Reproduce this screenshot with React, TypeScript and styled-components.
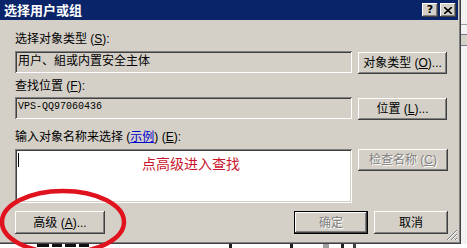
import React from "react";
import styled, { createGlobalStyle, css } from "styled-components";

const Global = createGlobalStyle`
  html, body { margin: 0; padding: 0; background: #ffffff; }
  body { font-family: "Liberation Sans", "Noto Sans CJK SC", sans-serif; font-size: 12px; color: #000; }
  * { box-sizing: border-box; }
`;

const Page = styled.div`
  position: relative;
  width: 467px;
  height: 248px;
  overflow: hidden;
  display: flex;
  flex-direction: column;
  background: #ffffff;
`;

const TopRow = styled.div`
  display: flex;
  height: 244px;
`;

const Dialog = styled.div`
  width: 461px;
  height: 244px;
  background: #d4d0c8;
  display: flex;
  flex-direction: column;
  box-shadow: inset -1px -1px #404040, inset -2px -2px #808080;
`;

const TitleBar = styled.div`
  height: 20px;
  margin-right: 3px;
  background: #0a246a;
  display: flex;
  align-items: center;
  padding: 0 2px 0 4px;
`;

const Title = styled.div`
  flex: 1;
  color: #ffffff;
  font-weight: bold;
  font-size: 13px;
  line-height: 20px;
  font-family: "Noto Sans CJK SC", sans-serif;
`;

const CaptionButton = styled.div`
  width: 16px;
  height: 14px;
  background: #d4d0c8;
  box-shadow: inset -1px -1px #404040, inset 1px 1px #ffffff, inset -2px -2px #808080;
  display: flex;
  align-items: center;
  justify-content: center;
  font-family: "DejaVu Sans", sans-serif;
  font-weight: bold;
  font-size: 11px;
  line-height: 14px;
  color: #000;
  margin-left: 2px;
`;

const Content = styled.div`
  flex: 1;
  display: flex;
  flex-direction: column;
  padding: 11px 13px 0 15px;
  position: relative;
`;

const Label = styled.div<{ $mt?: number; $mb?: number }>`
  height: 16px;
  line-height: 16px;
  margin-top: ${(p) => p.$mt ?? 0}px;
  margin-bottom: ${(p) => p.$mb ?? 0}px;
  white-space: nowrap;
  u { text-decoration: underline; }
`;

const Link = styled.span`
  color: #0000cc;
  text-decoration: underline;
`;

const Row = styled.div`
  display: flex;
  align-items: flex-start;
  gap: 6px;
`;

const sunken = css`
  box-shadow: inset 1px 1px #808080, inset -1px -1px #ffffff, inset 2px 2px #404040, inset -2px -2px #d4d0c8;
`;

const Field = styled.div<{ $mono?: boolean }>`
  width: 337px;
  height: 22px;
  ${sunken};
  background: #d4d0c8;
  padding: 2px 3px 0 3px;
  line-height: 16px;
  white-space: nowrap;
  ${(p) =>
    p.$mono &&
    css`
      font-family: "Liberation Mono", monospace;
      font-size: 10px;
    `}
`;

const TextArea = styled.div`
  width: 337px;
  height: 54px;
  ${sunken};
  background: #ffffff;
  display: flex;
  align-items: flex-start;
  padding: 4px 0 0 3px;
`;

const Caret = styled.div`
  width: 1px;
  height: 14px;
  background: #000;
`;

const Hint = styled.div`
  margin-left: 123px;
  margin-top: 1px;
  color: #c8142c;
  font-size: 14px;
  line-height: 18px;
  font-family: "Noto Sans CJK SC", sans-serif;
`;

const Button = styled.div<{ $w: number; $h?: number; $disabled?: boolean; $default?: boolean; $mt?: number }>`
  width: ${(p) => p.$w}px;
  height: ${(p) => p.$h ?? 22}px;
  margin-top: ${(p) => p.$mt ?? 0}px;
  background: #d4d0c8;
  display: flex;
  align-items: center;
  justify-content: center;
  white-space: nowrap;
  line-height: 16px;
  box-shadow: inset -1px -1px #404040, inset 1px 1px #ffffff, inset -2px -2px #808080, inset 2px 2px #d4d0c8;
  ${(p) =>
    p.$default &&
    css`
      box-shadow: inset 0 0 0 1px #000, inset -2px -2px #404040, inset 2px 2px #ffffff, inset -3px -3px #808080;
    `}
  ${(p) =>
    p.$disabled &&
    css`
      color: #808080;
      text-shadow: 1px 1px #ffffff;
    `}
`;

const Footer = styled.div`
  display: flex;
  align-items: flex-start;
  margin-top: 8px;
  gap: 6px;
`;

const Spacer = styled.div`
  flex: 1;
`;

const Grip = styled.svg`
  position: absolute;
  right: 3px;
  bottom: 3px;
`;

const RightStrip = styled.div`
  flex: 1;
  background: #f2f2f2;
  display: flex;
  flex-direction: column;
`;

const StripLine = styled.div<{ $h: number; $c: string; $mt?: number }>`
  height: ${(p) => p.$h}px;
  margin-top: ${(p) => p.$mt ?? 0}px;
  background: ${(p) => p.$c};
`;

const BottomStrip = styled.div`
  flex: 1;
  display: flex;
  align-items: flex-start;
  background: #ffffff;
  overflow: hidden;
`;

const BehindBar = styled.div<{ $ml: number; $w: number; $c: string; $h?: number }>`
  margin-left: ${(p) => p.$ml}px;
  width: ${(p) => p.$w}px;
  height: ${(p) => p.$h ?? 4}px;
  background: ${(p) => p.$c};
`;

const Annotation = styled.svg`
  position: absolute;
  left: 0;
  top: 0;
  pointer-events: none;
`;

export default function App() {
  return (
    <>
      <Global />
      <Page>
        <TopRow>
          <Dialog>
            <TitleBar>
              <Title>选择用户或组</Title>
              <CaptionButton>?</CaptionButton>
              <CaptionButton>
                <svg width="8" height="7" viewBox="0 0 8 7">
                  <path d="M0 0 L8 7 M8 0 L0 7" stroke="#000" strokeWidth="1.6" />
                </svg>
              </CaptionButton>
            </TitleBar>
            <Content>
              <Label $mb={4}>
                选择对象类型 (<u>S</u>):
              </Label>
              <Row>
                <Field>用户、組或内置安全主体</Field>
                <Button $w={89} $mt={1}>
                  对象类型 (<u>O</u>)...
                </Button>
              </Row>
              <Label $mt={4} $mb={3}>
                查找位置 (<u>F</u>):
              </Label>
              <Row>
                <Field $mono>VPS-QQ97060436</Field>
                <Button $w={89} $mt={1}>
                  位置 (<u>L</u>)...
                </Button>
              </Row>
              <Label $mt={9} $mb={4}>
                输入对象名称来选择 (<Link>示例</Link>) (<u>E</u>):
              </Label>
              <Row>
                <TextArea>
                  <Caret />
                  <Hint>点高级进入查找</Hint>
                </TextArea>
                <Button $w={90} $disabled>
                  检查名称 (<u>C</u>)
                </Button>
              </Row>
              <Footer>
                <Button $w={90} $h={23}>
                  高级 (<u>A</u>)...
                </Button>
                <Spacer />
                <Button $w={74} $h={23} $default $disabled>
                  确定
                </Button>
                <Button $w={74} $h={23}>
                  取消
                </Button>
              </Footer>
              <Grip width="12" height="12" viewBox="0 0 12 12">
                <path d="M11 1 L1 11 M11 5 L5 11 M11 9 L9 11" stroke="#808080" strokeWidth="1" />
                <path d="M11 2 L2 11 M11 6 L6 11 M11 10 L10 11" stroke="#ffffff" strokeWidth="1" />
              </Grip>
            </Content>
          </Dialog>
          <RightStrip>
            <StripLine $h={1} $c="#a0a0a0" $mt={24} />
            <StripLine $h={1} $c="#808080" $mt={9} />
            <StripLine $h={10} $c="#d4d0c8" />
            <StripLine $h={1} $c="#808080" />
          </RightStrip>
        </TopRow>
        <BottomStrip>
          <BehindBar $ml={37} $w={12} $c="#101010" $h={3} />
          <BehindBar $ml={3} $w={10} $c="#101010" $h={3} />
          <BehindBar $ml={3} $w={11} $c="#101010" $h={3} />
          <BehindBar $ml={3} $w={10} $c="#101010" $h={3} />
          <BehindBar $ml={140} $w={3} $c="#202020" />
          <BehindBar $ml={58} $w={3} $c="#202020" />
          <BehindBar $ml={30} $w={6} $c="#a0a0a0" />
          <BehindBar $ml={12} $w={3} $c="#202020" />
          <BehindBar $ml={9} $w={3} $c="#404040" />
        </BottomStrip>
        <Annotation width="467" height="248" viewBox="0 0 467 248">
          <ellipse cx="63" cy="222" rx="61" ry="31" fill="none" stroke="#e0121e" strokeWidth="4.5" />
        </Annotation>
      </Page>
    </>
  );
}
